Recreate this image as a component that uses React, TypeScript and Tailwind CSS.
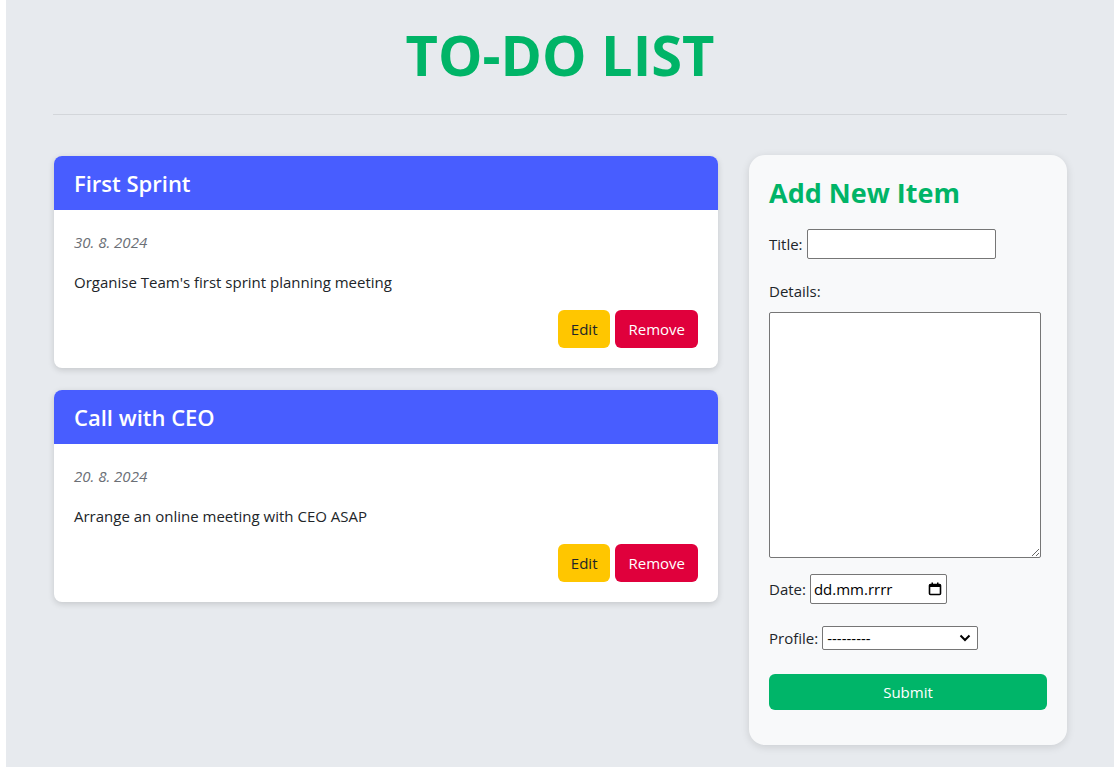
import React from 'react';

interface Todo {
  title: string;
  date: string;
  details: string;
}

const todos: Todo[] = [
  { title: 'First Sprint', date: '30. 8. 2024', details: "Organise Team's first sprint planning meeting" },
  { title: 'Call with CEO', date: '20. 8. 2024', details: 'Arrange an online meeting with CEO ASAP' },
];

function TodoCard({ todo }: { todo: Todo }) {
  return (
    <div className="bg-white rounded-lg shadow-[0_2px_6px_rgba(0,0,0,0.15)] overflow-hidden">
      {/* Header */}
      <div className="bg-[#485dff] h-[54px] px-5 flex items-center">
        <h2 className="text-white text-[22px] font-semibold">{todo.title}</h2>
      </div>

      {/* Body */}
      <div className="px-5 pt-[22px] pb-5">
        <p className="italic text-[15px] text-[#6b6f76] leading-[20px]">{todo.date}</p>
        <p className="text-[15px] text-[#212529] leading-[20px] mt-5">{todo.details}</p>
        <div className="flex justify-end gap-[5px] mt-[18px]">
          <button className="h-[38px] px-[13px] rounded-md bg-[#ffc600] text-[#212529] text-[15px]">Edit</button>
          <button className="h-[38px] px-[13px] rounded-md bg-[#e0003c] text-white text-[15px]">Remove</button>
        </div>
      </div>
    </div>
  );
}

function AddItemForm() {
  return (
    <div className="bg-[#f8f9fa] rounded-2xl shadow-[0_2px_8px_rgba(0,0,0,0.12)] px-5 pt-[20px] pb-[35px]">
      <h2 className="text-[#00b467] text-[27px] font-bold leading-[36px]">Add New Item</h2>

      <form className="mt-[18px] text-[15px] text-[#212529]" onSubmit={(e) => e.preventDefault()}>
        {/* Title */}
        <div className="flex items-center">
          <label htmlFor="title" className="mr-[4px]">Title:</label>
          <input id="title" type="text" className="w-[189px] h-[30px] bg-white border border-[#767676] rounded-[2px] px-1" />
        </div>

        {/* Details */}
        <label htmlFor="details" className="block mt-[22px] leading-[20px]">Details:</label>
        <textarea id="details" className="block mt-[11px] w-[272px] h-[246px] bg-white border border-[#767676] rounded-[2px] resize" />

        {/* Date */}
        <div className="flex items-center mt-[16px]">
          <label htmlFor="date" className="mr-[4px]">Date:</label>
          <div className="w-[137px] h-[30px] bg-white border border-[#767676] rounded-[2px] flex items-center pl-[3px] pr-[4px]">
            <input id="date" type="text" placeholder="dd.mm.rrrr" className="w-full min-w-0 outline-none placeholder:text-black text-black" />
            <svg width="14" height="14" viewBox="0 0 14 14" className="shrink-0">
              <rect x="1.5" y="2.5" width="11" height="10" rx="1" fill="none" stroke="#000" strokeWidth="1.6" />
              <rect x="1.5" y="2.5" width="11" height="2.5" fill="#000" />
              <rect x="3.5" y="0.5" width="1.5" height="3" fill="#000" />
              <rect x="9" y="0.5" width="1.5" height="3" fill="#000" />
            </svg>
          </div>
        </div>

        {/* Profile */}
        <div className="flex items-center mt-[22px]">
          <label htmlFor="profile" className="mr-[4px]">Profile:</label>
          <div className="relative w-[156px] h-[24px]">
            <select id="profile" className="appearance-none w-full h-full bg-white border border-[#767676] rounded-[2px] pl-[4px] text-black text-[15px] leading-none">
              <option>---------</option>
            </select>
            <svg width="12" height="8" viewBox="0 0 12 8" className="absolute right-[7px] top-[8px] pointer-events-none">
              <path d="M1.5 1.5 L6 6 L10.5 1.5" fill="none" stroke="#000" strokeWidth="2" />
            </svg>
          </div>
        </div>

        {/* Submit */}
        <button type="submit" className="mt-[24px] w-[278px] h-[36px] rounded-md bg-[#00b569] text-white text-[15px]">
          Submit
        </button>
      </form>
    </div>
  );
}

export default function App() {
  return (
    <div className="bg-white px-[6px] min-h-screen font-['Open_Sans',sans-serif]">
      <div className="bg-[#e7eaee] min-h-screen px-[47px] pb-[21px]">
        {/* Page title */}
        <h1 className="text-center text-[#00b467] text-[56px] font-bold leading-[68px] pt-[20px]">
          TO-DO LIST
        </h1>
        <hr className="mt-[26px] border-t border-[#d3d6da]" />

        <div className="flex items-start gap-[31px] mt-[40px] pl-[1px]">
          {/* Cards */}
          <div className="w-[665px] flex flex-col gap-[22px] mt-[1px]">
            {todos.map((todo) => (
              <TodoCard key={todo.title} todo={todo} />
            ))}
          </div>

          {/* Form panel */}
          <div className="w-[318px]">
            <AddItemForm />
          </div>
        </div>
      </div>
    </div>
  );
}
